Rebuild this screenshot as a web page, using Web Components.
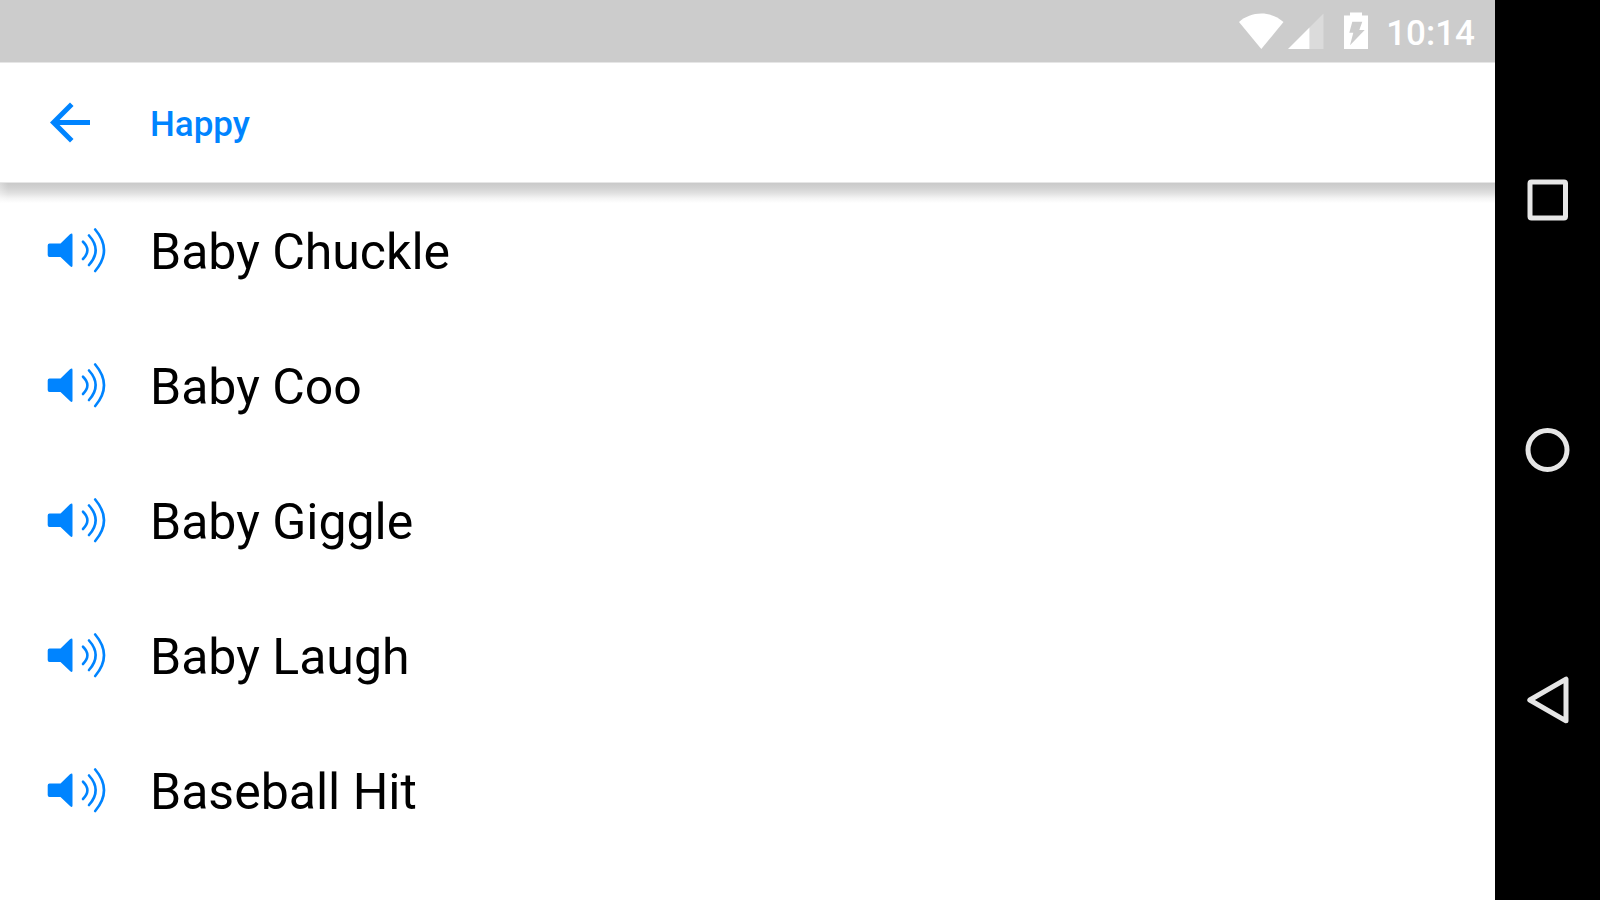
<!DOCTYPE html>
<html lang="en">
<head>
<meta charset="utf-8">
<meta name="viewport" content="width=device-width, initial-scale=1">
<title>Happy</title>
<style>
  body { margin: 0; background: #fff; font-family: Roboto, sans-serif; --accent: #0084ff; }
</style>
</head>
<body>
<phone-shell>
  <status-bar slot="status" time="10:14"></status-bar>
  <app-bar slot="bar">Happy</app-bar>
  <sound-list>
    <sound-row>Baby Chuckle</sound-row>
    <sound-row>Baby Coo</sound-row>
    <sound-row>Baby Giggle</sound-row>
    <sound-row>Baby Laugh</sound-row>
    <sound-row>Baseball Hit</sound-row>
  </sound-list>
  <nav-rail slot="nav"></nav-rail>
</phone-shell>

<script>
const define = (name, html, setup) => {
  const template = document.createElement('template');
  template.innerHTML = html;
  customElements.define(name, class extends HTMLElement {
    constructor() {
      super();
      this.attachShadow({ mode: 'open' }).append(template.content.cloneNode(true));
    }
    connectedCallback() { if (setup) setup(this); }
  });
};

define('phone-shell', `
  <style>
    :host { display: flex; min-height: 100vh; }
    .screen { flex: 1; min-width: 0; display: flex; flex-direction: column; }
    main { flex: 1; }
  </style>
  <div class="screen">
    <slot name="status"></slot>
    <slot name="bar"></slot>
    <main><slot></slot></main>
  </div>
  <slot name="nav"></slot>`);

define('status-bar', `
  <style>
    :host { display: flex; align-items: center; justify-content: flex-end; gap: 18px; height: 62px; padding-right: 20px; background: #ccc; color: #fff; }
    svg { display: block; fill: currentColor; }
    .radio { display: flex; gap: 4px; }
    time { font-size: 35px; font-weight: 500; line-height: 40px; padding-top: 5px; }
  </style>
  <div class="radio">
    <svg width="45" height="38" viewBox="0 0 45 38" role="img" aria-label="Wi-Fi"><path d="M0 10C6 4.500 14 1.500 22.300 1.500S38.500 4.500 44.500 10L22.300 37Z"/></svg>
    <svg width="36" height="38" viewBox="0 0 36 38" role="img" aria-label="Signal"><path fill-opacity=".3" d="M21.500 15.500 35.500 1.500V37H21.500Z"/><path d="M0 37 21.500 15.500V37Z"/></svg>
  </div>
  <svg width="26" height="38" viewBox="0 0 26 38" role="img" aria-label="Battery charging"><path fill-rule="evenodd" d="M8 .500H20V3.500H26V37H2V3.500H8ZM10.300 9.700 7.300 20.700H11.300L8 33.300 22.700 18H17.300L20.300 9.700Z"/></svg>
  <time></time>`, el => { el.shadowRoot.querySelector('time').textContent = el.getAttribute('time'); });

define('app-bar', `
  <style>
    :host { position: relative; display: flex; align-items: center; gap: 50px; height: 118px; padding: 0 0 1px 40px; border: solid #e6e6e6; border-width: 1px 0; background: #fff; color: var(--accent); }
    :host::after { content: ""; position: absolute; top: calc(100% + 1px); left: 0; right: 0; height: 20px; pointer-events: none;
      background: linear-gradient(90deg, rgba(255, 255, 255, .3), transparent 8px), linear-gradient(#c9c9c9, #d2d2d2 25%, #e0e0e0 50%, #f3f3f3 75%, #fff); }
    button { border: 0; padding: 0; background: none; color: inherit; }
    svg { display: block; fill: currentColor; }
    h1 { margin: 0; padding-top: 6px; font-size: 35px; font-weight: 500; line-height: 40px; }
  </style>
  <button type="button" aria-label="Back"><svg width="60" height="60" viewBox="0 -.2 24 24"><path d="M20 11H7.830l5.590-5.590L12 4l-8 8 8 8 1.410-1.410L7.830 13H20v-2z"/></svg></button>
  <h1><slot></slot></h1>`);

define('sound-list', `
  <style>
    :host { display: flex; flex-direction: column; padding-top: 1px; }
  </style>
  <slot></slot>`, el => el.setAttribute('role', 'list'));

define('sound-row', `
  <style>
    :host { display: block; }
    button { display: flex; align-items: center; gap: 44px; width: 100%; height: 135px; border: 0; padding: 0 46px; background: none; color: #000; font: 400 50px/60px Roboto, sans-serif; text-align: left; }
    svg { flex: none; color: var(--accent); }
  </style>
  <button type="button">
    <svg width="60" height="50" viewBox="0 0 60 50" aria-hidden="true">
      <path fill="currentColor" d="M3.500 16.500H14.500L24 7.300Q26.500 5.500 26.500 8V38.500Q26.500 41 24 39L14.500 30H3.500Q1.700 30 1.700 28V18.500Q1.700 16.500 3.500 16.500Z"/>
      <g fill="none" stroke="currentColor" stroke-width="2.600" stroke-linecap="round">
        <path d="M37 14.700Q45.800 23.200 37 32"/>
        <path d="M43 8.500Q56.300 23.200 43 38"/>
        <path d="M49.200 2.500Q66.800 23.200 49.200 44"/>
      </g>
    </svg>
    <span><slot></slot></span>
  </button>`, el => el.setAttribute('role', 'listitem'));

define('nav-rail', `
  <style>
    :host { flex: none; width: 105px; background: #000; }
    nav { display: flex; flex-direction: column; justify-content: center; height: 100%; }
    button { display: grid; place-items: center; height: 250px; border: 0; padding: 0; background: none; color: #e6e6e6; }
    svg { display: block; fill: none; stroke: currentColor; stroke-width: 5; stroke-linejoin: round; }
  </style>
  <nav aria-label="System">
    <button type="button" aria-label="Recent apps"><svg width="51" height="50" viewBox="0 0 51 50"><rect x="8" y="7" width="35.500" height="36" rx="1.500"/></svg></button>
    <button type="button" aria-label="Home"><svg width="51" height="50" viewBox="0 0 51 50"><circle cx="25.500" cy="25" r="19.500"/></svg></button>
    <button type="button" aria-label="Back"><svg width="51" height="50" viewBox="0 0 51 50"><path d="M7.800 25 44 4.200V45.800Z"/></svg></button>
  </nav>`);
</script>
</body>
</html>
